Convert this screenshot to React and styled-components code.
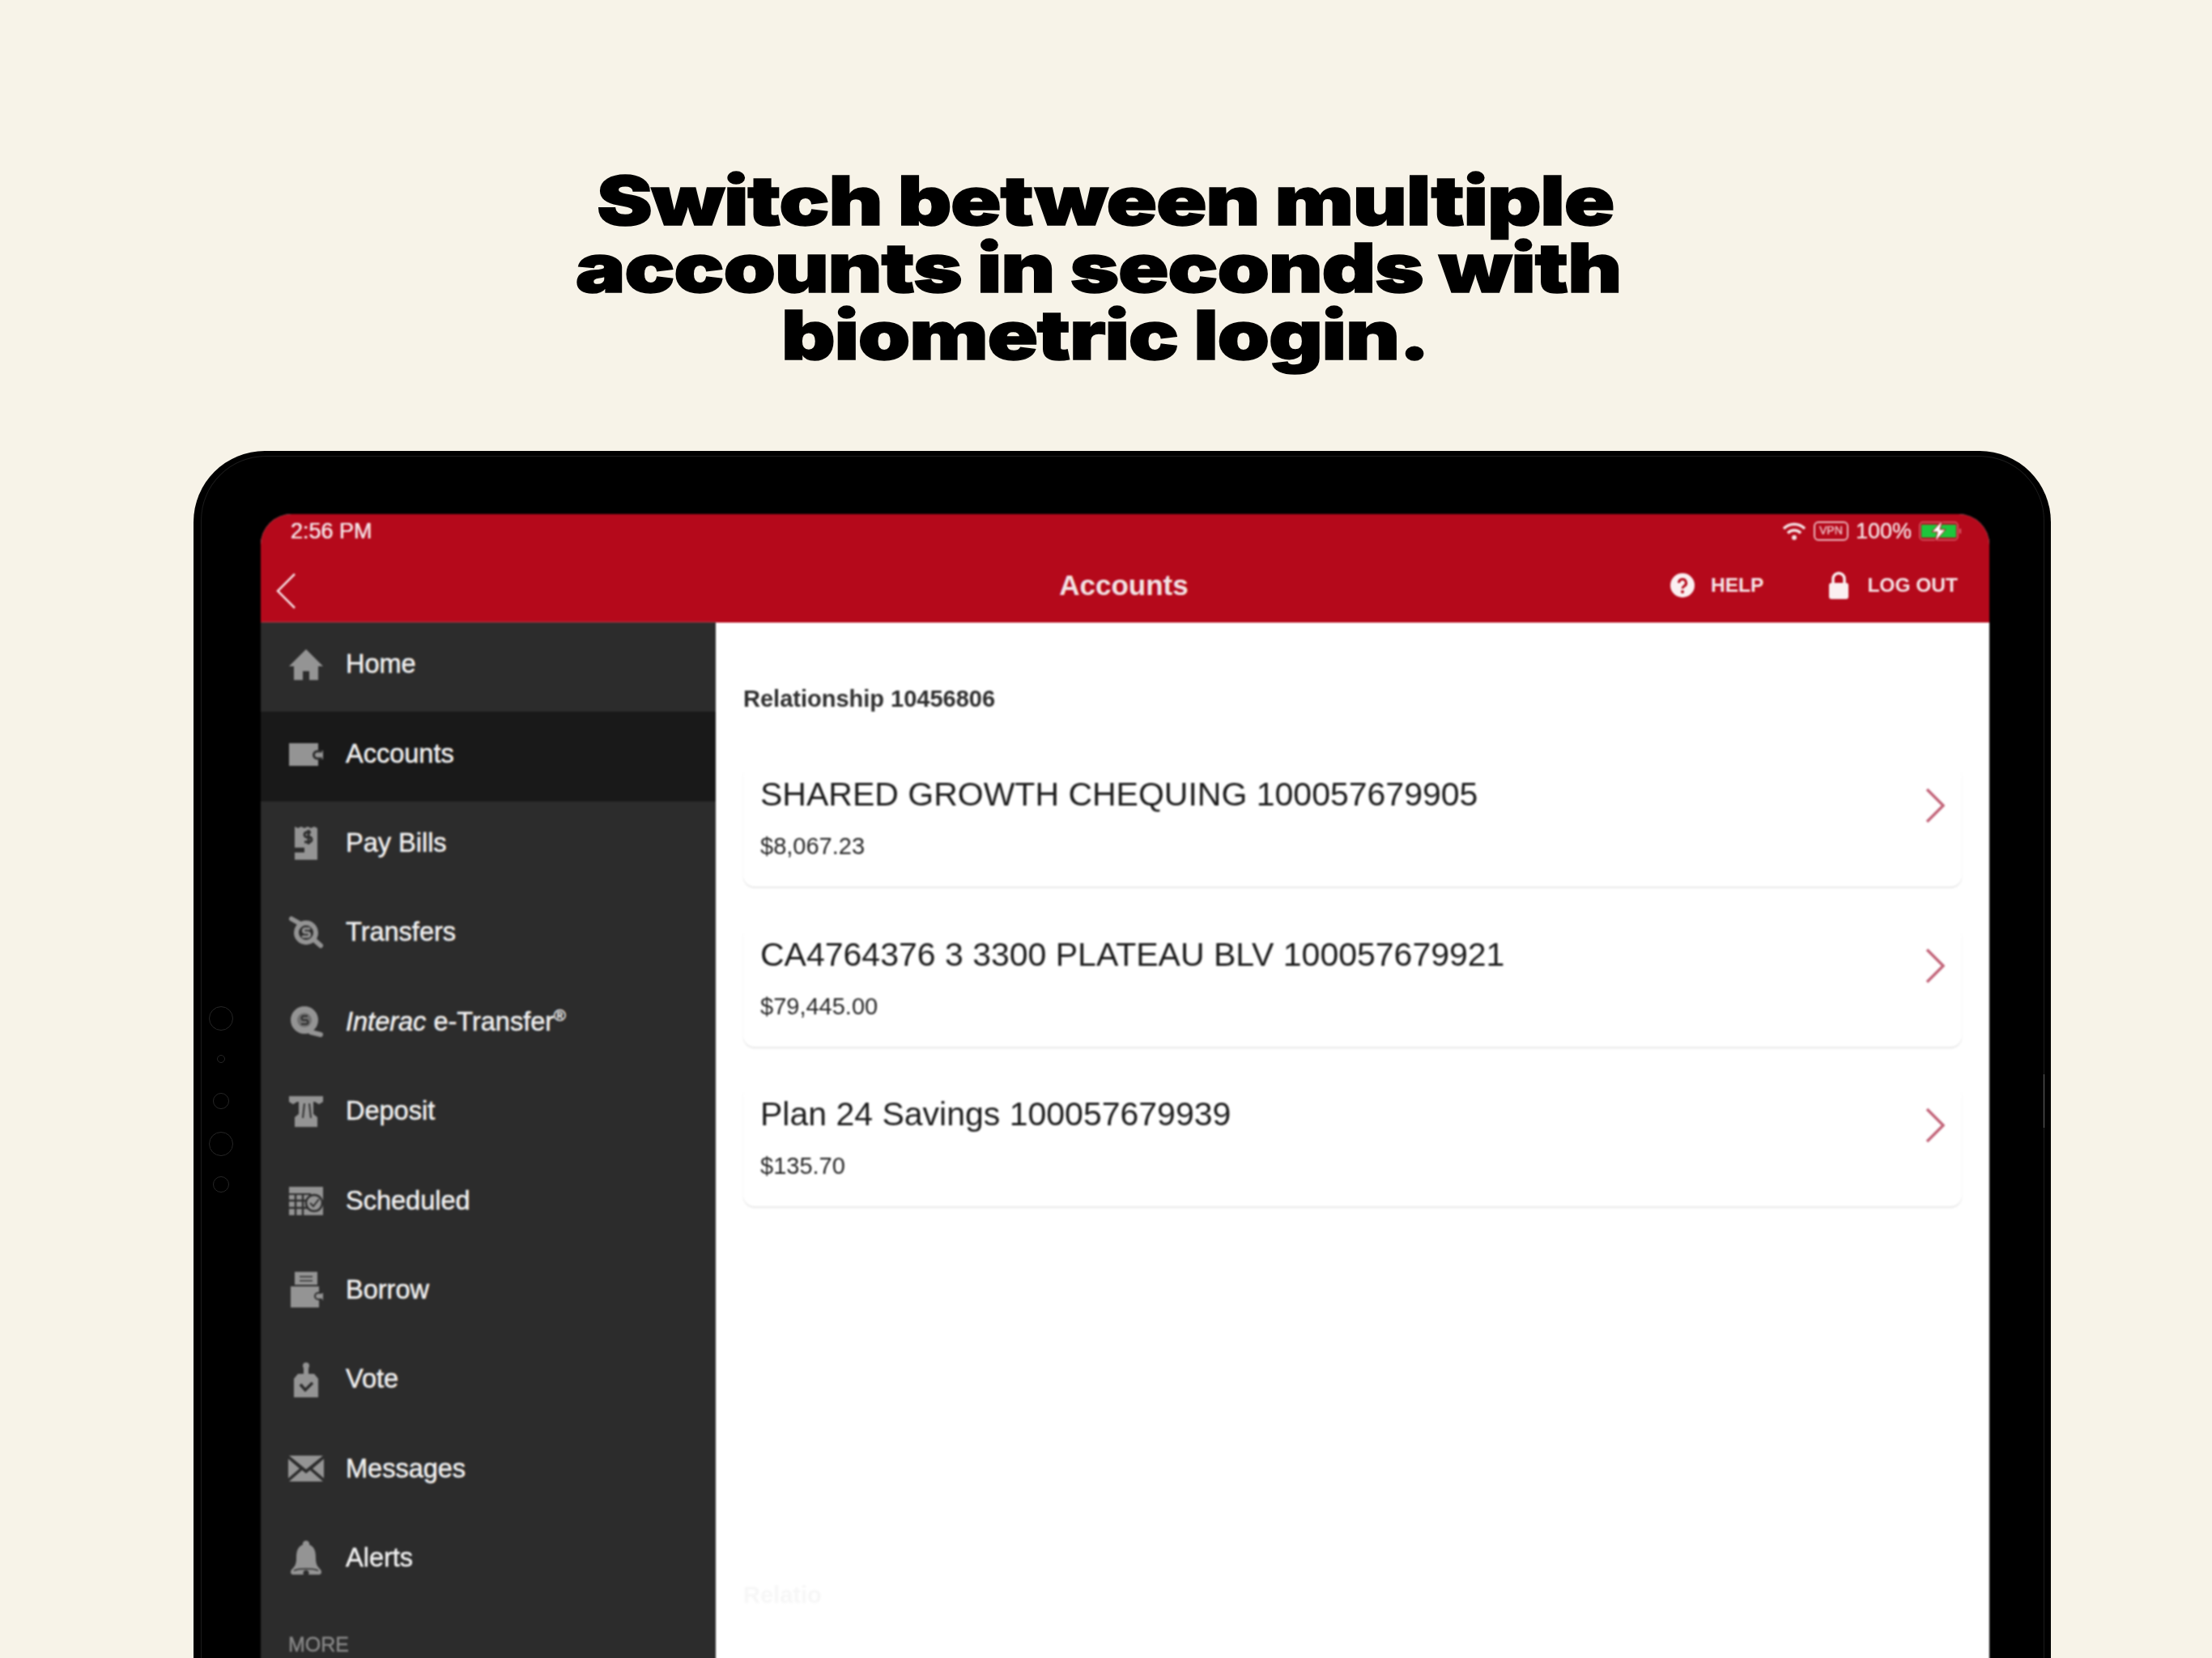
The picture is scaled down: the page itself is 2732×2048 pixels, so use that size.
import React from 'react'
import styled, { createGlobalStyle } from 'styled-components'

const GlobalStyle = createGlobalStyle`
	html, body {
		margin: 0;
		padding: 0;
		background: #f7f3e8;
	}
`

const Page = styled.div`
	width: 2732px;
	height: 2048px;
	overflow: hidden;
	background: #f7f3e8;
	display: flex;
	flex-direction: column;
	font-family: "Liberation Sans", Arial, sans-serif;
`

const Heading = styled.h1`
	flex: none;
	margin: 0;
	padding-top: 206px;
	height: 557px;
	box-sizing: border-box;
	font-family: "Inter", "Liberation Sans", sans-serif;
	font-weight: 900;
	font-size: 84px;
	line-height: 83px;
	color: #000;
	text-align: center;
	transform: scaleX(1.23);
	transform-origin: 1370px 0;
	-webkit-text-stroke: 1.5px #000;
`

const HeadingLine = styled.div`
	white-space: nowrap;
	letter-spacing: -1px;
	padding-right: ${p => p.$inset || 0}px;
`

const Device = styled.div`
	position: relative;
	flex: none;
	margin-left: 239px;
	width: 2294px;
	height: 1510px;
	box-sizing: border-box;
	padding: 78px 76px 0 83px;
	background: #000;
	border-radius: 88px 88px 0 0;
`

const Bezel = styled.div`
	position: absolute;
	inset: 6px 8px 0 9px;
	border: 1px solid #1c1c1c;
	border-bottom: none;
	border-radius: 80px 80px 0 0;
	pointer-events: none;
`

const Sensor = styled.span`
	position: absolute;
	left: ${p => 34 - p.$r}px;
	top: ${p => p.$y - p.$r}px;
	width: ${p => p.$r * 2}px;
	height: ${p => p.$r * 2}px;
	box-sizing: border-box;
	border: 1px solid #262626;
	border-radius: 50%;
`

const SideButton = styled.span`
	position: absolute;
	right: 8px;
	top: 770px;
	width: 1px;
	height: 66px;
	background: #666;
`

const Screen = styled.div`
	height: 100%;
	display: flex;
	flex-direction: column;
	background: #fff;
	border-radius: 38px 38px 0 0;
	overflow: hidden;
	filter: blur(0.9px);
`

const TopBar = styled.header`
	flex: none;
	height: 134px;
	display: flex;
	flex-direction: column;
	background: #b5091b;
	color: #fff;
`

const StatusBar = styled.div`
	height: 42px;
	display: flex;
	align-items: center;
	justify-content: space-between;
	padding: 0 33px 0 37px;
	font-size: 27px;
	color: #f6e4e6;
	text-shadow: 0 0 1px #f6e4e6;
`

const StatusRight = styled.div`
	display: flex;
	align-items: center;
	gap: 9px;
`

const VpnBadge = styled.span`
	width: 43px;
	height: 24px;
	box-sizing: border-box;
	border: 2.5px solid #eeb9c0;
	border-radius: 6px;
	font-size: 14px;
	line-height: 19px;
	text-align: center;
	color: #eeb9c0;
`

const NavBar = styled.div`
	position: relative;
	flex: 1;
	display: flex;
	align-items: center;
	justify-content: flex-end;
	padding: 0 39px 1px 18px;
`

const BackIcon = styled.svg`
	margin-right: auto;
	margin-top: 14px;
	width: 26px;
	height: 46px;
`

const NavTitle = styled.div`
	position: absolute;
	left: 1066px;
	top: 0;
	width: 0;
	height: 91px;
	display: flex;
	justify-content: center;
	align-items: center;
	white-space: nowrap;
	font-size: 35px;
	font-weight: bold;
	color: #f3e3e5;
`

const NavAction = styled.div`
	display: flex;
	align-items: center;
	gap: ${p => p.$gap}px;
	margin-left: 80px;
	font-size: 24.5px;
	font-weight: bold;
	color: #f6e4e6;
`

const Body = styled.div`
	flex: 1;
	display: flex;
	min-height: 0;
`

const Sidebar = styled.nav`
	flex: none;
	width: 562px;
	background: #2c2c2c;
	box-shadow: 1px 0 2px #999;
`

const MenuRow = styled.div`
	height: 110.4px;
	box-sizing: border-box;
	display: flex;
	align-items: center;
	padding: 0 0 7px 34px;
	background: ${p => (p.$active ? '#191919' : 'transparent')};
	font-size: 32.5px;
	color: #f0f0f0;
	-webkit-text-stroke: 0.5px #f0f0f0;
`

const MenuIcon = styled.svg`
	flex: none;
	width: 44px;
	height: 44px;
	margin-right: 27px;
	fill: #949494;
	stroke: none;
`

const Sup = styled.sup`
	font-size: 20px;
	line-height: 0;
`

const MoreLabel = styled.div`
	padding: 34px 0 0 34px;
	font-size: 25px;
	color: #8a8a8a;
	-webkit-text-stroke: 0.4px #8a8a8a;
`

const Content = styled.main`
	flex: 1;
	min-width: 0;
	padding: 78px 34px 0;
	background: #fff;
`

const Relationship = styled.div`
	height: 32px;
	margin-bottom: 66px;
	line-height: 32px;
	font-size: 29px;
	font-weight: bold;
	color: #2e2e2e;
`

const AccountCard = styled.div`
	position: relative;
	height: 150px;
	margin-bottom: 47.7px;
	box-sizing: border-box;
	padding: 13px 0 0 21px;
	border-radius: 14px;
	background: #fff;
	box-shadow: 0 2px 2px #e8e8e8;
`

const AccountName = styled.div`
	height: 46px;
	line-height: 46px;
	font-size: 41px;
	color: #1c1c1c;
`

const AccountBalance = styled.div`
	margin-top: 25px;
	height: 32px;
	line-height: 32px;
	font-size: 29px;
	color: #262626;
`

const Chevron = styled.svg`
	position: absolute;
	right: 21px;
	top: 28px;
	width: 24px;
	height: 44px;
`

const FaintText = styled.div`
	margin-top: 464px;
	font-size: 29px;
	font-weight: bold;
	color: #f7f7f7;
`

// dark strokes knock the inner details out of the grey icon shapes
const Cut = styled.g`
	fill: none;
	stroke: #2c2c2c;
	stroke-width: 3;
`

const Line = styled.g`
	fill: none;
	stroke: #949494;
	stroke-linecap: round;
	stroke-width: ${p => p.$w || 6}px;
`

const icons = {
	home: <path d="M22 3 L43 24 H37 V41 H26 V30 H18 V41 H7 V24 H1 Z" />,
	wallet: (
		<>
			<path d="M1 9 H37 V18 H43 V29 H37 V37 H1 Z" />
			<Cut><path d="M42 19 H36 A4.500 4.500 0 0 0 36 28 H42" /></Cut>
		</>
	),
	bill: (
		<>
			<path d="M8 2 L12 4 L16 2 L20 4 L24 2 L28 4 L32 2 L36 4 V43 H8 Z" />
			<Cut>
				<path d="M28 9 H23 A3 3 0 0 0 23 15 H26 A3 3 0 0 1 26 21 H20" />
				<path d="M25 6 V24" />
				<path d="M7 31 H20" strokeWidth="6" />
			</Cut>
		</>
	),
	transfer: (
		<>
			<Line>
				<circle cx="22" cy="22" r="12" />
				<path d="M4 5 L13 10" />
				<path d="M31 30 L40 38" />
			</Line>
			<Line $w={3}><path d="M26 17 H21 A2.500 2.500 0 0 0 21 22 H24 A2.500 2.500 0 0 1 24 27 H18" /></Line>
		</>
	),
	etransfer: (
		<>
			<circle cx="20" cy="20" r="17" />
			<Line><path d="M28 35 L40 38" /></Line>
			<circle cx="20" cy="20" r="9" fill="#6f6f6f" />
			<Cut><path d="M24 15 H19 A2.500 2.500 0 0 0 19 20 H22 A2.500 2.500 0 0 1 22 25 H16" strokeWidth="2" /></Cut>
		</>
	),
	deposit: (
		<>
			<path d="M1 3 H43 V10 L38 13 L33 10 H31 V25 L36 29 V41 H8 V29 L13 25 V10 H11 L6 13 L1 10 Z" />
			<Cut><path d="M20 12 L18 30 M26 12 L28 30" strokeWidth="2" /></Cut>
		</>
	),
	scheduled: (
		<>
			<path d="M1 5 H43 V40 H1 Z" />
			<Cut>
				<path d="M1 14 H28" strokeWidth="2" />
				<path d="M1 22 H26 M1 31 H26 M9 14 V40 M18 14 V40" strokeWidth="2.500" />
			</Cut>
			<circle cx="32" cy="25" r="10" fill="#949494" stroke="#2c2c2c" strokeWidth="2.500" />
			<Cut><path d="M27 25 L31 29 L38 20" strokeWidth="2" /></Cut>
		</>
	),
	borrow: (
		<>
			<path d="M8 0 H36 V16 H8 Z" />
			<path d="M3 18 H38 V26 H43 V35 H38 V44 H3 Z" />
			<Cut>
				<path d="M14 6 H30 M14 11 H30" strokeWidth="1.500" />
				<path d="M42 26 H37 A4 4 0 0 0 37 34 H42" strokeWidth="2" />
			</Cut>
		</>
	),
	vote: (
		<>
			<circle cx="22" cy="5" r="4" />
			<path d="M19 8 H25 V15 H19 Z" />
			<path d="M12 15 H32 L37 21 V44 H7 V21 Z" />
			<Cut><path d="M15 28 L21 35 L30 26" strokeWidth="3.500" /></Cut>
		</>
	),
	messages: (
		<path d="M1 6 H43 L22 23 Z M0 10 L14 22 L0 34 Z M44 10 L30 22 L44 34 Z M17 24 L22 28 L27 24 L43 38 H1 Z" />
	),
	alerts: (
		<>
			<path d="M22 0 A4 4 0 0 1 26 5 C33 8 34 14 34 22 C34 29 36 32 40 36 C42 39 41 42 37 42 H7 C3 42 2 39 4 36 C8 32 10 29 10 22 C10 14 11 8 18 5 A4 4 0 0 1 22 0 Z" />
			<Cut><path d="M7 37 C14 34 30 34 37 37" strokeWidth="1.500" /></Cut>
			<circle cx="22" cy="40" r="3.500" fill="#2c2c2c" />
		</>
	),
}

const menu = [
	{ icon: 'home', label: 'Home' },
	{ icon: 'wallet', label: 'Accounts', active: true },
	{ icon: 'bill', label: 'Pay Bills' },
	{ icon: 'transfer', label: 'Transfers' },
	{ icon: 'etransfer', label: <><i>Interac</i>&nbsp;e-Transfer<Sup>®</Sup></> },
	{ icon: 'deposit', label: 'Deposit' },
	{ icon: 'scheduled', label: 'Scheduled' },
	{ icon: 'borrow', label: 'Borrow' },
	{ icon: 'vote', label: 'Vote' },
	{ icon: 'messages', label: 'Messages' },
	{ icon: 'alerts', label: 'Alerts' },
]

const accounts = [
	{ name: 'SHARED GROWTH CHEQUING 100057679905', balance: '$8,067.23' },
	{ name: 'CA4764376 3 3300 PLATEAU BLV 100057679921', balance: '$79,445.00' },
	{ name: 'Plan 24 Savings 100057679939', balance: '$135.70' },
]

const App = () => {
	return (
		<Page>
			<GlobalStyle />
			<Heading>
				<HeadingLine>Switch between multiple</HeadingLine>
				<HeadingLine $inset={14}>accounts in seconds with</HeadingLine>
				<HeadingLine>biometric login.</HeadingLine>
			</Heading>
			<Device>
				<Bezel />
				<Sensor $y={701} $r={15} />
				<Sensor $y={751} $r={5} />
				<Sensor $y={803} $r={10} />
				<Sensor $y={856} $r={15} />
				<Sensor $y={906} $r={10} />
				<SideButton />
				<Screen>
					<TopBar>
						<StatusBar>
							<span>2:56 PM</span>
							<StatusRight>
								<svg width="30" height="24" viewBox="0 0 30 24" fill="none" stroke="#f6e4e6" strokeWidth="3.500">
									<path d="M2 9 A18 18 0 0 1 28 9" />
									<path d="M7 14.500 A11 11 0 0 1 23 14.500" />
									<circle cx="15" cy="20" r="3" fill="#f6e4e6" stroke="none" />
								</svg>
								<VpnBadge>VPN</VpnBadge>
								<span>100%</span>
								<svg width="54" height="26" viewBox="0 0 54 26">
									<rect x="1" y="2" width="47" height="22" rx="4" fill="none" stroke="#d8606c" strokeWidth="1.500" />
									<rect x="3" y="5" width="43" height="16" fill="#1fc63c" />
									<path d="M51 10 V16" stroke="#d8606c" strokeWidth="2" />
									<path d="M29 0 L16 14 H23 L20 26 L33 11 H26 Z" fill="#fff" stroke="#b5091b" strokeWidth="1" />
								</svg>
							</StatusRight>
						</StatusBar>
						<NavBar>
							<BackIcon viewBox="0 0 26 46" fill="none" stroke="#f6dfe2" strokeWidth="2.500">
								<path d="M24 2 L3 23 L24 44" />
							</BackIcon>
							<NavTitle>Accounts</NavTitle>
							<NavAction $gap={20}>
								<svg width="30" height="30" viewBox="0 0 30 30">
									<circle cx="15" cy="15" r="15" fill="#fbf0f1" />
									<path d="M10.500 12 A4.500 4.500 0 1 1 17 16 C15.500 17 15 17.500 15 19" fill="none" stroke="#b5091b" strokeWidth="3" />
									<circle cx="15" cy="23" r="2" fill="#b5091b" />
								</svg>
								<span>HELP</span>
							</NavAction>
							<NavAction $gap={22}>
								<svg width="26" height="34" viewBox="0 0 26 34">
									<path d="M6 15 V9 A7 7 0 0 1 20 9 V15" fill="none" stroke="#fbf0f1" strokeWidth="3.500" />
									<rect x="1" y="14" width="24" height="20" rx="3" fill="#fbf0f1" />
								</svg>
								<span>LOG OUT</span>
							</NavAction>
						</NavBar>
					</TopBar>
					<Body>
						<Sidebar>
							{menu.map(item => (
								<MenuRow key={item.icon} $active={item.active}>
									<MenuIcon viewBox="0 0 44 44">{icons[item.icon]}</MenuIcon>
									<span>{item.label}</span>
								</MenuRow>
							))}
							<MoreLabel>MORE</MoreLabel>
						</Sidebar>
						<Content>
							<Relationship>Relationship 10456806</Relationship>
							{accounts.map(account => (
								<AccountCard key={account.name}>
									<AccountName>{account.name}</AccountName>
									<AccountBalance>{account.balance}</AccountBalance>
									<Chevron viewBox="0 0 24 44" fill="none" stroke="#c26378" strokeWidth="3.500">
										<path d="M2 2 L22 22 L2 42" />
									</Chevron>
								</AccountCard>
							))}
							<FaintText>Relatio</FaintText>
						</Content>
					</Body>
				</Screen>
			</Device>
		</Page>
	)
}

export default App
